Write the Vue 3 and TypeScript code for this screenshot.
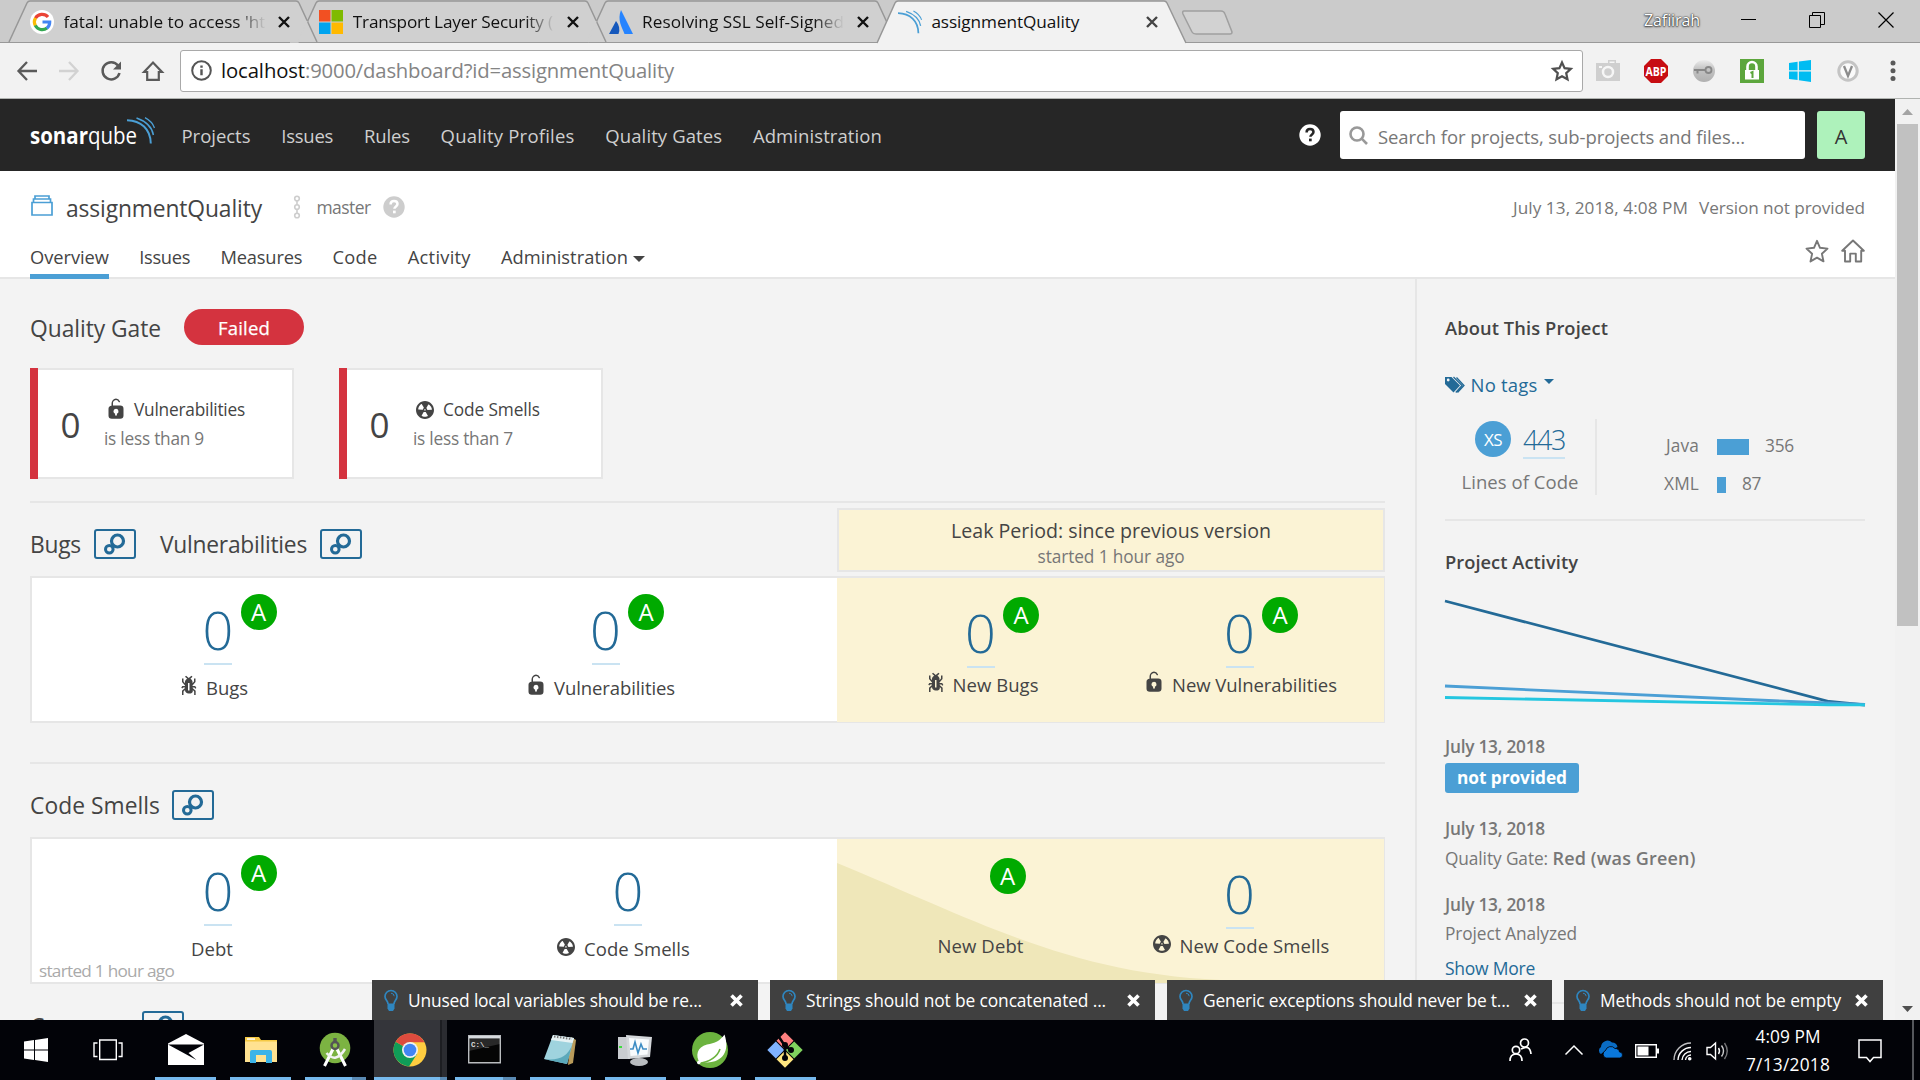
<script setup lang="ts">
import type { Directive } from 'vue'

// Tracks text in or out so that it fills the given width in pixels.
const vFit: Directive<HTMLElement, number> = {
  mounted(el, { value }) {
    const range = document.createRange()
    range.selectNodeContents(el)
    const natural = range.getBoundingClientRect().width
    const count = (el.textContent ?? '').length
    if (count > 0) el.style.letterSpacing = `${((value - natural) / count).toFixed(3)}px`
  },
}

interface Label { text: string; w: number }
interface Measure extends Label {
  key: string
  icon?: string
  value?: string
  rating?: string
}
interface Toast extends Label { width: number }
interface Task { name: string; width: number; more?: number; active?: boolean }

const navItems: Label[] = [
  { text: 'Projects', w: 69 },
  { text: 'Issues', w: 52 },
  { text: 'Rules', w: 46 },
  { text: 'Quality Profiles', w: 134 },
  { text: 'Quality Gates', w: 117 },
  { text: 'Administration', w: 129 },
]

const projectTabs: Label[] = [
  { text: 'Overview', w: 79 },
  { text: 'Issues', w: 51 },
  { text: 'Measures', w: 82 },
  { text: 'Code', w: 45 },
  { text: 'Activity', w: 63 },
  { text: 'Administration', w: 127 },
]

const conditions = [
  { icon: 'vuln', text: 'Vulnerabilities', w: 111, rule: 'is less than 9' },
  { icon: 'smell', text: 'Code Smells', w: 97, rule: 'is less than 7' },
]

const bugs: Measure[] = [
  { key: 'c1', icon: 'bug', text: 'Bugs', w: 42, value: '0', rating: 'A' },
  { key: 'c2', icon: 'vuln', text: 'Vulnerabilities', w: 121, value: '0', rating: 'A' },
]
const newBugs: Measure[] = [
  { key: 'c3', icon: 'bug', text: 'New Bugs', w: 86, value: '0', rating: 'A' },
  { key: 'c4', icon: 'vuln', text: 'New Vulnerabilities', w: 165, value: '0', rating: 'A' },
]
const smells: Measure[] = [
  { key: 'c1', text: 'Debt', w: 42, value: '0', rating: 'A' },
  { key: 'c2 wide', icon: 'smell', text: 'Code Smells', w: 106, value: '0' },
]
const newSmells: Measure[] = [
  { key: 'c3', text: 'New Debt', w: 86, rating: 'A' },
  { key: 'c4', icon: 'smell', text: 'New Code Smells', w: 150, value: '0' },
]

const languages = [
  { name: 'Java', w: 33, bar: 32, lines: '356', lw: 29 },
  { name: 'XML', w: 35, bar: 9, lines: '87', lw: 19 },
]

const toasts: Toast[] = [
  { text: 'Unused local variables should be re...', w: 294, width: 386 },
  { text: 'Strings should not be concatenated ...', w: 300, width: 385 },
  { text: 'Generic exceptions should never be t...', w: 307, width: 385 },
  { text: 'Methods should not be empty', w: 241, width: 319 },
]

const tasks: Task[] = [
  { name: 'mail', width: 61 },
  { name: 'folder', width: 61 },
  { name: 'studio', width: 47, more: 14 },
  { name: 'chrome', width: 66, more: 7, active: true },
  { name: 'cmd', width: 48, more: 13 },
  { name: 'notes', width: 61 },
  { name: 'monitor', width: 61 },
  { name: 'leaf', width: 61 },
  { name: 'git', width: 61 },
]
</script>

<template>
  <svg class="defs" aria-hidden="true">
    <symbol id="bug" viewBox="0 0 16 16"><path d="M11 9h1.3l.5.8.8-.5-.8-1.3H11v-.3l2-2.3V3h-1v2l-1 1.2V5c-.1-.8-.7-1.5-1.4-1.9L11 1.8l-.7-.7-1.8 1.6-1.8-1.6-.7.7 1.5 1.3C6.7 3.5 6.1 4.2 6 5v1.1L5 5V3H4v2.3l2 2.3V8H4.2l-.7 1.2.8.5.4-.7H6v.3l-2 1.9V14h1v-2.4l1-1C6 12 7.1 13 8.4 13h.8c.7 0 1.4-.3 1.8-.9.3-.4.3-.9.2-1.4l.9.9V14h1v-2.8l-2-1.9V9zm-2 2H8V6h1v5z" /></symbol>
    <symbol id="vuln" viewBox="0 0 16 16"><path d="M10.8 5H6V3.9a2.28 2.28 0 0 1 2-2.5 2.22 2.22 0 0 1 1.8 1.2.48.48 0 0 0 .7.2.48.48 0 0 0 .1-.7A3 3 0 0 0 8 .4a3.34 3.34 0 0 0-3 3.5v1.2a2.16 2.16 0 0 0-2 2.1v4.4a2.22 2.22 0 0 0 2.2 2.2h5.6a2.22 2.22 0 0 0 2.2-2.2V7.2A2.22 2.22 0 0 0 10.8 5zm-2.2 5.5v1.2H7.4v-1.2a1.66 1.66 0 0 1-1.1-1.6A1.75 1.75 0 0 1 8 7.2a1.71 1.71 0 0 1 .6 3.3z" /></symbol>
    <symbol id="smell" viewBox="0 0 16 16"><path d="M8 2C4.7 2 2 4.7 2 8s2.7 6 6 6 6-2.7 6-6-2.7-6-6-6zm-.5 5.5h.9v.9h-.9v-.9zm-3.8.2c-.1 0-.2-.1-.2-.2 0-.4.1-1.2.6-2S5.3 4.2 5.6 4c.2 0 .3 0 .3.1l1.3 2.3c0 .1 0 .2-.1.2-.1.2-.2.3-.3.5-.1.2-.2.4-.2.5 0 .1-.1.2-.2.2l-2.7-.1zM9.900 12c-.3.2-1.100.5-2 .5-.9 0-1.700-.3-2-.5-.1 0-.1-.2-.1-.3l1.300-2.300c0-.1.1-.1.2-.1.2.1.3.1.5.1s.4 0 .5-.1c.1 0 .2 0 .2.1l1.300 2.300c.2.2.2.3.1.3zm2.500-4.100L9.700 8c-.1 0-.2-.1-.2-.2 0-.2-.1-.4-.2-.5 0-.1-.2-.3-.3-.4-.1 0-.1-.1-.1-.2l1.300-2.300c.1-.1.2-.1.3-.1.3.2 1 .7 1.500 1.500s.6 1.600.6 2c0 0-.1.1-.2.1z" /></symbol>
    <symbol id="link" viewBox="0 0 24 24"><circle cx="14.500" cy="9" r="6" fill="none" stroke="#236a97" stroke-width="3.200" /><circle cx="6.300" cy="17.200" r="3.800" fill="none" stroke="#236a97" stroke-width="3" /></symbol>
    <symbol id="waves" viewBox="0 0 28 27"><g fill="none" stroke="#4b9fd5" stroke-width="2"><path d="M0 3.200C14 3.600 23.500 12 23.800 26.500" /><path d="M9.500 1C18 4 25 10 26.400 18" stroke-width="1.500" /><path d="M18 .6C22.500 3 26 6.500 27.500 11" stroke-width="1.300" /></g></symbol>
    <symbol id="q" viewBox="0 0 22 22"><circle cx="11" cy="11" r="10.700" fill="var(--disc)" /><path d="M7.600 8.400C7.600 6.200 9.100 5.100 11 5.100s3.500 1.100 3.500 3c0 2.300-3.100 2.300-3.100 4.700" fill="none" stroke="var(--mark)" stroke-width="2.500" /><rect x="10" y="14.600" width="2.700" height="2.700" fill="var(--mark)" /></symbol>
    <symbol id="x" viewBox="0 0 12 12"><path d="M1 1l10 10M11 1L1 11" fill="none" stroke="currentColor" stroke-width="2.400" /></symbol>
  </svg>

  <div class="screen">
    <header class="strip">
      <svg class="strip-art" width="1920" height="43">
        <path d="M0 42.500H1920" stroke="#999" />
        <g fill="#d0d0d0" stroke="#979797" stroke-width="1.500">
          <path d="M587 42L605 3Q606 1 608 1H875Q877 1 878 3L896 42" />
          <path d="M298 42L316 3Q317 1 319 1H585Q587 1 588 3L606 42" />
          <path d="M9 42L27 3Q28 1 30 1H296Q298 1 299 3L317 42" />
        </g>
        <path d="M307 21L298 42H290M596 21L588 42" fill="none" stroke="#d0d0d0" stroke-width="1.500" />
        <path d="M877 43L895 3Q896 1 898 1H1164Q1166 1 1167 3L1186 43" fill="#f2f2f2" stroke="#979797" stroke-width="1.500" />
        <path d="M1184 11H1221Q1224 11 1225 14L1232 32Q1232 34 1230 34H1196Q1193 34 1192 32L1183 14Q1182 11 1184 11Z" fill="#d2d2d2" stroke="#a0a0a0" stroke-width="1.500" />
      </svg>
      <div class="tabs">
        <div class="tab">
          <svg width="24" height="24" viewBox="0 0 24 24"><circle cx="12" cy="12" r="12" fill="#fff" /><g fill="none" stroke-width="3.200"><path d="M18 7A7.700 7.700 0 0 0 5.400 8.300" stroke="#ea4335" /><path d="M5.500 8A7.800 7.800 0 0 0 5.400 15.700" stroke="#fbbc05" /><path d="M5.300 15.400A7.700 7.700 0 0 0 17 18" stroke="#34a853" /><path d="M16.800 18.200A7.700 7.700 0 0 0 19.700 12H12.500" stroke="#4285f4" /></g></svg>
          <div class="tab-text fade"><span v-fit="202">fatal: unable to access 'ht</span></div>
          <svg class="tab-x" width="12" height="12"><use href="#x" /></svg>
        </div>
        <div class="tab">
          <svg width="24" height="24" viewBox="0 0 24 24"><path fill="#f25022" d="M0 0h11.500v11.500H0z" /><path fill="#7fba00" d="M12.500 0H24v11.500H12.500z" /><path fill="#00a4ef" d="M0 12.500h11.500V24H0z" /><path fill="#ffb900" d="M12.500 12.500H24V24H12.500z" /></svg>
          <div class="tab-text fade"><span v-fit="200">Transport Layer Security (</span></div>
          <svg class="tab-x" width="12" height="12"><use href="#x" /></svg>
        </div>
        <div class="tab">
          <svg width="24" height="24" viewBox="0 0 24 24"><path d="M7 11Q12 17 9.500 24H0Z" fill="#1558bc" /><path d="M12 0L24 24H15.500C13 17 8 10 12 0Z" fill="#2684ff" /></svg>
          <div class="tab-text fade"><span v-fit="202">Resolving SSL Self-Signed</span></div>
          <svg class="tab-x" width="12" height="12"><use href="#x" /></svg>
        </div>
        <div class="tab">
          <svg width="24" height="24"><use href="#waves" /></svg>
          <div class="tab-text"><span v-fit="148">assignmentQuality</span></div>
          <svg class="tab-x soft" width="12" height="12"><use href="#x" /></svg>
        </div>
      </div>
      <div class="window-tools">
        <span v-fit="56" class="profile">Zafiirah</span>
        <svg width="15" height="15"><path d="M0 7.500h15" stroke="#000" /></svg>
        <svg width="16" height="16" fill="none" stroke="#000"><path d="M.5 3.500h11v12H.5zM3.500 3V.5h12v12h-4" /></svg>
        <svg width="16" height="16"><path d="M.5.5l15 15M15.500.5l-15 15" stroke="#000" stroke-width="1.200" /></svg>
      </div>
    </header>

    <div class="toolbar">
      <div class="nav-icons">
        <svg width="20" height="20" fill="none" stroke="#5a5a5a" stroke-width="2.300"><path d="M10 1L1.500 10 10 19M1.500 10H20" /></svg>
        <svg width="20" height="20" fill="none" stroke="#d2d2d2" stroke-width="2.300"><path d="M10 1L18.500 10 10 19M18.500 10H0" /></svg>
        <svg width="22" height="20" fill="none" stroke="#5a5a5a" stroke-width="2.500"><path d="M18 4.500A8.600 8.600 0 1 0 19.500 12" /><path d="M21 .5V8.500H13Z" fill="#5a5a5a" stroke="none" /></svg>
        <svg width="20" height="20" fill="none" stroke="#5a5a5a" stroke-width="2.200"><path d="M1 11L10 1.500 19 11H15.800V18.800H4.200V11Z" /></svg>
      </div>
      <div class="address">
        <svg width="21" height="21" viewBox="0 0 21 21"><circle cx="10.500" cy="10.500" r="9.300" fill="none" stroke="#555" stroke-width="2" /><path d="M9.300 9.300h2.400v6H9.300zM9.300 5.500h2.400v2.300H9.300z" fill="#555" /></svg>
        <p class="url"><b v-fit="84">localhost</b><span v-fit="369">:9000/dashboard?id=assignmentQuality</span></p>
        <svg width="22" height="22" viewBox="0 0 22 22"><path d="M11 2.500l2.600 5.700 6.200.7-4.600 4.200 1.300 6.200L11 16.200l-5.500 3.100 1.300-6.200L2.200 8.900l6.200-.7z" fill="none" stroke="#505050" stroke-width="2.200" /></svg>
      </div>
      <div class="extensions">
        <svg width="24" height="24" viewBox="0 0 24 24"><path d="M0 4h12V1h8v3h4v18H0z" fill="#cfcfcf" /><circle cx="12" cy="13" r="5" fill="none" stroke="#f6f6f6" stroke-width="2.500" /><path d="M13.500 2.500h5v1.500h-5zM3 7h3v2H3z" fill="#f6f6f6" /></svg>
        <svg width="24" height="24" viewBox="0 0 24 24"><path d="M7 0h10l7 7v10l-7 7H7l-7-7V7z" fill="#c70d12" /><text x="12" y="16.500" text-anchor="middle" textLength="21" lengthAdjust="spacingAndGlyphs" fill="#fff" class="abp">ABP</text></svg>
        <svg width="24" height="24" viewBox="0 0 24 24"><defs><linearGradient id="orb" x2="0" y2="1"><stop offset="0" stop-color="#ececec" /><stop offset=".4" stop-color="#c4c4c4" /><stop offset="1" stop-color="#b0b0b0" /></linearGradient></defs><circle cx="12" cy="12" r="11" fill="url(#orb)" /><path d="M2 11h12M5.500 11v3.500" stroke="#888" stroke-width="2" /><circle cx="16.500" cy="11" r="3" fill="none" stroke="#888" stroke-width="1.800" /></svg>
        <svg width="24" height="24" viewBox="0 0 24 24"><path fill="#5ca63c" d="M0 0h24v24H0z" /><path d="M7.500 11V7.500a4.500 4.500 0 0 1 9 0V11" fill="none" stroke="#fff" stroke-width="2.600" /><path fill="#fff" d="M5 11h14v9.500H5z" /><path d="M10.500 14l2-1v6" fill="none" stroke="#5ca63c" stroke-width="2" /></svg>
        <svg width="22" height="22" viewBox="0 0 22 22" fill="#00bcf2"><path d="M0 3l8.600-1.200v8.500H0zM9.900 1.600L22 0v10.300H9.900zM0 11.600h8.600v8.500L0 19zM9.900 11.600H22V22L9.900 20.300z" /></svg>
        <svg width="22" height="22" viewBox="0 0 22 22"><circle cx="11" cy="11" r="9.200" fill="#fafafa" stroke="#c4c4c4" stroke-width="3" /><path d="M7 6l4 10 4-10" fill="none" stroke="#8c8c8c" stroke-width="2.300" /></svg>
        <svg width="6" height="22" viewBox="0 0 6 22" fill="#5a5a5a"><circle cx="3" cy="3" r="2.500" /><circle cx="3" cy="10.700" r="2.500" /><circle cx="3" cy="18.400" r="2.500" /></svg>
      </div>
    </div>

    <div class="viewport">
      <div class="page">
        <nav class="global-nav">
          <svg class="logo" width="128" height="36" viewBox="0 0 128 36">
            <text x="0" y="26" textLength="107" lengthAdjust="spacingAndGlyphs" class="logo-text"><tspan class="strong">sonar</tspan>qube</text>
            <use href="#waves" x="97" y="-1" width="28" height="27" />
          </svg>
          <div class="global-links"><a v-for="n in navItems" :key="n.text" v-fit="n.w">{{ n.text }}</a></div>
          <svg class="help-light" width="22" height="22"><use href="#q" /></svg>
          <div class="search">
            <svg width="19" height="19" viewBox="0 0 19 19" fill="none" stroke="#999" stroke-width="2.600"><circle cx="8" cy="8" r="6.500" /><path d="M12.700 12.700l5.300 5.300" /></svg>
            <span v-fit="367">Search for projects, sub-projects and files...</span>
          </div>
          <div class="avatar">A</div>
        </nav>

        <div class="project-head">
          <div class="crumb">
            <svg width="22" height="21" viewBox="0 0 22 21" fill="none" stroke="#4b9fd5" stroke-width="1.700"><path d="M1 7.500h20V20H1zM2.500 7.500V4h17v3.500M4 4V1h14v3" /></svg>
            <h1 v-fit="196">assignmentQuality</h1>
            <svg class="branch" width="8" height="24" viewBox="0 0 8 24" fill="none" stroke="#cdcdcd" stroke-width="1.600"><circle cx="4" cy="3.500" r="2.300" /><circle cx="4" cy="12" r="2.300" /><circle cx="4" cy="20.500" r="2.300" /><path d="M4 6v3.500M4 14.500V18" /></svg>
            <span v-fit="54" class="muted">master</span>
            <svg class="help-grey" width="22" height="22"><use href="#q" /></svg>
            <div class="meta"><span v-fit="175">July 13, 2018, 4:08 PM</span><span v-fit="166">Version not provided</span></div>
          </div>
          <div class="project-nav">
            <a v-for="(t, i) in projectTabs" :key="t.text" :class="{ on: i === 0 }"><span v-fit="t.w">{{ t.text }}</span><i v-if="i === 5" class="caret"></i></a>
            <div class="project-actions">
              <svg width="24" height="24" viewBox="0 0 24 24" fill="none" stroke="#777" stroke-width="1.900"><path d="M12 1.800l3 7 7.500.8-5.600 5.200 1.600 7.600L12 18.600l-6.500 3.800 1.600-7.600L1.500 9.600 9 8.800z" stroke-linejoin="round" /></svg>
              <svg width="24" height="24" viewBox="0 0 24 24" fill="none" stroke="#777" stroke-width="1.900"><path d="M1.200 11.800L12 1.500l10.800 10.300h-2.600v10.700h-5.400V14.600H9.200v7.900H4V11.800z" stroke-linejoin="round" /></svg>
            </div>
          </div>
        </div>

        <div class="columns">
          <main>
            <div class="gate">
              <h2 v-fit="131">Quality Gate</h2>
              <span class="pill"><span v-fit="52">Failed</span></span>
            </div>
            <div class="conditions">
              <div v-for="c in conditions" :key="c.text" class="condition">
                <span class="cond-value">0</span>
                <div class="cond-info">
                  <div class="cond-name"><svg width="24" height="24"><use :href="'#' + c.icon" /></svg><span v-fit="c.w">{{ c.text }}</span></div>
                  <div class="cond-rule"><span v-fit="100">{{ c.rule }}</span></div>
                </div>
              </div>
            </div>

            <div class="domain first">
              <div class="domain-head">
                <h2 v-fit="51">Bugs</h2><span class="link-btn"><svg width="24" height="24"><use href="#link" /></svg></span>
                <h2 v-fit="147" class="second">Vulnerabilities</h2><span class="link-btn"><svg width="24" height="24"><use href="#link" /></svg></span>
              </div>
              <div class="leak-head">
                <span v-fit="320">Leak Period: since previous version</span>
                <small v-fit="147">started 1 hour ago</small>
              </div>
            </div>
            <div class="panel">
              <div class="overall">
                <div v-for="m in bugs" :key="m.text" class="cell" :class="m.key">
                  <div class="value"><span>{{ m.value }}</span><b v-if="m.rating" class="rating">{{ m.rating }}</b></div>
                  <div class="label"><svg v-if="m.icon" width="24" height="24"><use :href="'#' + m.icon" /></svg><span v-fit="m.w">{{ m.text }}</span></div>
                </div>
              </div>
              <div class="leak">
                <div v-for="m in newBugs" :key="m.text" class="cell" :class="m.key">
                  <div class="value"><span>{{ m.value }}</span><b v-if="m.rating" class="rating">{{ m.rating }}</b></div>
                  <div class="label"><svg v-if="m.icon" width="24" height="24"><use :href="'#' + m.icon" /></svg><span v-fit="m.w">{{ m.text }}</span></div>
                </div>
              </div>
            </div>

            <div class="domain second-domain">
              <div class="domain-head">
                <h2 v-fit="130">Code Smells</h2><span class="link-btn"><svg width="24" height="24"><use href="#link" /></svg></span>
              </div>
            </div>
            <div class="panel">
              <div class="overall">
                <div v-for="m in smells" :key="m.text" class="cell" :class="m.key">
                  <div class="value"><span>{{ m.value }}</span><b v-if="m.rating" class="rating">{{ m.rating }}</b></div>
                  <div class="label"><svg v-if="m.icon" width="24" height="24"><use :href="'#' + m.icon" /></svg><span v-fit="m.w">{{ m.text }}</span></div>
                </div>
                <small v-fit="135" class="since">started 1 hour ago</small>
              </div>
              <div class="leak">
                <svg class="area" width="547" height="144"><path d="M0 24C150 86 240 138 400 141.500C450 143 500 143 547 143.500V144H0Z" fill="#efe7b9" /></svg>
                <div v-for="m in newSmells" :key="m.text" class="cell" :class="m.key">
                  <div class="value" :class="{ bare: !m.value }"><span>{{ m.value }}</span><b v-if="m.rating" class="rating">{{ m.rating }}</b></div>
                  <div class="label"><svg v-if="m.icon" width="24" height="24"><use :href="'#' + m.icon" /></svg><span v-fit="m.w">{{ m.text }}</span></div>
                </div>
              </div>
            </div>
            <div class="coverage"><h2 v-fit="100">Coverage</h2><span class="link-btn"><svg width="24" height="24"><use href="#link" /></svg></span></div>
          </main>

          <aside>
            <h3 v-fit="163">About This Project</h3>
            <div class="tags">
              <svg width="20" height="18" viewBox="0 0 20 18"><path d="M0 1h6.500L15 9.500 8.500 16.500 0 8z" fill="#236a97" /><circle cx="3.200" cy="4" r="1.400" fill="#f3f3f3" /><path d="M8.500 1L17 9.500 10.800 16.500M11.500 1.500L19 9.500l-6.500 7" fill="none" stroke="#236a97" stroke-width="1.300" /></svg>
              <span v-fit="67">No tags</span><i class="caret"></i>
            </div>
            <div class="size">
              <div class="loc">
                <div class="loc-top"><span class="xs">XS</span><span class="loc-num"><span v-fit="42">443</span></span></div>
                <span v-fit="117" class="loc-label">Lines of Code</span>
              </div>
              <div class="langs">
                <div v-for="l in languages" :key="l.name" class="lang">
                  <span class="lang-name"><span v-fit="l.w">{{ l.name }}</span></span>
                  <i class="lang-bar" :style="{ width: l.bar + 'px' }"></i>
                  <span v-fit="l.lw">{{ l.lines }}</span>
                </div>
              </div>
            </div>
            <h3 v-fit="133" class="activity-title">Project Activity</h3>
            <svg class="chart" width="420" height="112" viewBox="0 0 420 112" fill="none" stroke-width="2.800">
              <path d="M0 7L384 107.500 420 111" stroke="#236a97" />
              <path d="M0 92L346 107.500 420 110.500" stroke="#4b9fd5" />
              <path d="M0 103.500L384 110.800H420" stroke="#24c6e0" />
            </svg>
            <div class="event"><time v-fit="100">July 13, 2018</time><span class="version"><span v-fit="110">not provided</span></span></div>
            <div class="event e2"><time v-fit="100">July 13, 2018</time><p><span v-fit="103">Quality Gate:</span> <b v-fit="143">Red (was Green)</b></p></div>
            <div class="event e3"><time v-fit="100">July 13, 2018</time><p><span v-fit="132">Project Analyzed</span></p></div>
            <a class="more"><span v-fit="90">Show More</span></a>
            <hr />
          </aside>
        </div>
      </div>

      <div class="scrollbar">
        <svg width="25" height="25"><path d="M7 16l5.500-6 5.500 6z" fill="#a3a3a3" /></svg>
        <div class="thumb"></div>
        <svg class="down" width="25" height="25"><path d="M7 11h11l-5.500 6z" fill="#505050" /></svg>
      </div>

      <div class="toasts">
        <div v-for="t in toasts" :key="t.text" class="toast" :style="{ width: t.width + 'px' }">
          <svg width="14" height="21" viewBox="0 0 14 21"><path d="M4 14C4 10.500 1 10 1 6.500a6 6 0 0 1 12 0C13 10 10 10.500 10 14" fill="none" stroke="#2f86bf" stroke-width="1.700" /><path d="M3.500 13.500h7v5L9 21H5l-1.500-2.500z" fill="#2f86bf" /><path d="M7 3.200a3.300 3.300 0 0 1 3.200 3" fill="none" stroke="#2f86bf" /></svg>
          <span v-fit="t.w">{{ t.text }}</span>
          <svg class="toast-x" width="13" height="13" viewBox="0 0 13 13"><path d="M1.500 1.500l10 10M11.500 1.500l-10 10" stroke="#fff" stroke-width="3.600" /></svg>
        </div>
      </div>
    </div>

    <footer class="taskbar">
      <svg class="start" width="24" height="24" viewBox="0 0 24 24" fill="#fff"><path d="M0 3.400l10-1.300v9.300H0zM11 1.900L24 0v11.400H11zM0 12.500h10v9.400L0 20.600zM11 12.500h13V24L11 22.100z" /></svg>
      <svg class="view" width="30" height="22" viewBox="0 0 30 22" fill="none" stroke="#fff" stroke-width="1.400"><path d="M6.700 1h16.600v19.500H6.700zM4.500 4H1v13.500h3.500M25.500 4H29v13.500h-3.500" /></svg>
      <div class="tasks">
        <div v-for="t in tasks" :key="t.name" class="task" :class="{ active: t.active }">
          <div class="task-icon" :class="t.name">
            <svg v-if="t.name === 'mail'" width="36" height="32" viewBox="0 0 36 32"><path d="M0 9.500L18 0l18 9.500V31H0z" fill="#fff" /><path d="M0 10.500L36 10.500 20.500 19 28.500 26z" fill="#020308" /></svg>
            <svg v-else-if="t.name === 'folder'" width="32" height="28" viewBox="0 0 32 28"><path d="M0 1h14l2 3h16v22H0z" fill="#f5c945" /><path d="M0 5.500h32V26H0z" fill="#ffe291" /><path d="M2 2.300h8v1.500H2z" fill="#fff" /><path d="M5 27V16q0-2 2-2h18q2 0 2 2v11h-6v-8H11v8z" fill="#3cb4e8" /></svg>
            <svg v-else-if="t.name === 'studio'" width="32" height="36" viewBox="0 0 32 36"><circle cx="16" cy="16" r="15.300" fill="#7cb342" /><path d="M14.500 16L5.500 34M17.500 16L26.500 34" stroke="#fff" stroke-width="3" /><path d="M7.500 21Q17 32 26 17" fill="none" stroke="#f2f2f2" stroke-width="2.500" /><path d="M14.300 6h3.400v4h-3.400z" fill="#555" /><circle cx="16" cy="13.500" r="3.500" fill="#8bc34a" stroke="#555" stroke-width="2.500" /></svg>
            <svg v-else-if="t.name === 'chrome'" width="34" height="34" viewBox="0 0 34 34"><circle cx="17" cy="17" r="16.500" fill="#ffcd40" /><path d="M17 17L2.700 8.700A16.500 16.500 0 0 0 16 33.400l8-12.300z" fill="#109d58" /><path d="M17 17L2.700 8.700A16.500 16.500 0 0 1 31.500 9.300H17z" fill="#dd4b3e" /><circle cx="17" cy="17" r="8" fill="#f1f1f1" /><circle cx="17" cy="17" r="6.300" fill="#4285f4" /></svg>
            <svg v-else-if="t.name === 'cmd'" width="33" height="29" viewBox="0 0 33 29"><path d="M.7.700h31.600v27H.7z" fill="#050505" stroke="#b9bcbf" stroke-width="1.400" /><path d="M1 1h31v2.500H1z" fill="#d6dade" /><path d="M1 4h31v5L1 16z" fill="#fff" opacity=".14" /><text x="3" y="12" class="cmd-text">C:\_</text></svg>
            <svg v-else-if="t.name === 'notes'" width="32" height="34" viewBox="0 0 32 34"><path d="M27 4l5 3-3 23-5 2z" fill="#b99b5a" /><path d="M9 2l21 3-7 26L0 26z" fill="#9fd3de" /><path d="M9 2l21 3-1.500 5L7 7z" fill="#e6f2f4" /><path d="M0 26l23 5 5-19q-6 17-28 14z" fill="#5ba9bb" /><path d="M10 3.500l18 2.600" stroke="#777" stroke-width="2" stroke-dasharray="1.500 1.500" /></svg>
            <svg v-else-if="t.name === 'monitor'" width="36" height="34" viewBox="0 0 36 34"><path d="M0 4h12v22H0z" fill="#c9ccd0" /><path d="M8 2l26 2-2 20-22 2z" fill="#d4d7da" /><path d="M11 5l20 1.500-1.500 15L12.500 23z" fill="#f8fbfd" /><path d="M12 16h3l2-7 3 11 3-9 2 5h4" fill="none" stroke="#3c8cc4" stroke-width="1.600" /><ellipse cx="21" cy="29" rx="9" ry="4" fill="#b9bcc0" /><path d="M1 13h3v2H1z" fill="#3ddc3d" /></svg>
            <svg v-else-if="t.name === 'leaf'" width="36" height="36" viewBox="0 0 36 36"><circle cx="18" cy="18" r="18" fill="#6cb33f" /><path d="M32.500 2.500C38 19 31 30 15 30.500L8 31C3 24 5 15 15 12.500C23 11 28 9 32.500 2.500Z" fill="#fff" /><path d="M6 31.500C17 30 25 26 28 17" fill="none" stroke="#6cb33f" stroke-width="1.600" /><circle cx="6.800" cy="30.500" r="1.800" fill="#fff" /></svg>
            <svg v-else width="36" height="36" viewBox="0 0 36 36"><g transform="rotate(45 18 18)"><path d="M5.500 5.500h12v12h-12z" fill="#ff8080" /><path d="M18.500 5.500h12v12h-12z" fill="#80d35e" /><path d="M5.500 18.500h12v12h-12z" fill="#80b3ff" /><path d="M18.500 18.500h12v12h-12z" fill="#ffe680" /></g><path d="M12 5l6 9v12M18 14l6 4" fill="none" stroke="#020308" stroke-width="2.500" /><g fill="#020308"><circle cx="18" cy="13" r="3" /><circle cx="24" cy="18" r="3" /><circle cx="18" cy="26" r="3" /></g></svg>
          </div>
          <div class="task-line"><i :style="{ width: t.width + 'px' }"></i><i v-if="t.more" class="dim" :style="{ width: t.more + 'px' }"></i></div>
        </div>
      </div>
      <div class="tray">
        <svg width="23" height="24" viewBox="0 0 23 24" fill="none" stroke="#fff" stroke-width="1.700"><circle cx="7" cy="12" r="3.700" /><path d="M1 23q0-7 6-7t6 7" /><circle cx="15.500" cy="5" r="4" /><path d="M12 11q9-5 10 5" /></svg>
        <svg class="chev" width="18" height="10" fill="none" stroke="#fff" stroke-width="1.500"><path d="M.5 9.500L9 1l8.500 8.500" /></svg>
        <svg class="cloud" width="24" height="16" viewBox="0 0 24 16"><path d="M3 12A4 4 0 0 1 3 5a6.500 6.500 0 0 1 11-4.500 5.500 5.500 0 0 1 5.500 4.500l-2 1L9 7z" fill="#0a6cc4" /><path d="M8 16a4 4 0 0 1-.5-7.500 5.500 5.500 0 0 1 9.500-2 4 4 0 0 1 4.500 3.500 3 3 0 0 1 0 6z" fill="#0a78dc" stroke="#020308" stroke-width=".8" /></svg>
        <svg class="battery" width="24" height="14" viewBox="0 0 24 14"><path d="M.7.700h20.600v12.600H.7z" fill="none" stroke="#fff" stroke-width="1.400" /><path d="M2.500 2.500h11v9h-11zM22 4.500h2v5h-2z" fill="#fff" /></svg>
        <svg class="wifi" width="19" height="19" viewBox="0 0 19 19" fill="none" stroke="#fff" stroke-width="1.400"><path d="M1 18A17 17 0 0 1 18 1" opacity=".75" /><path d="M5 18A13 13 0 0 1 18 5.500M9 18a9 9 0 0 1 9-8.500M12.500 18a5.500 5.500 0 0 1 5.500-5" /><circle cx="16.700" cy="16.700" r="1.800" fill="#fff" stroke="none" /></svg>
        <svg class="speaker" width="23" height="20" viewBox="0 0 23 20" fill="none" stroke="#fff" stroke-width="1.400"><path d="M1 6.500h3.500L9.500 2v16L4.500 13.500H1zM12.500 7q2 3 0 6" /><path d="M15.500 4.500q4 5.500 0 11" opacity=".8" /><path d="M18.500 2q5.500 8 0 16" opacity=".45" /></svg>
        <div class="clock"><span v-fit="65">4:09 PM</span><span v-fit="84">7/13/2018</span></div>
        <svg class="note" width="24" height="24" viewBox="0 0 24 24" fill="none" stroke="#fff" stroke-width="1.500"><path d="M1 1h22v17.500h-7.500L12 22.500 8.500 18.500H1z" /></svg>
        <i class="peek"></i>
      </div>
    </footer>
  </div>
</template>

<style>
body { margin: 0; overflow: hidden; }
</style>

<style scoped>
* { box-sizing: border-box; margin: 0; padding: 0; }
svg { display: block; flex: none; overflow: visible; }
.defs { position: absolute; width: 0; height: 0; }
.screen { width: 1920px; height: 1080px; display: flex; flex-direction: column; overflow: hidden; font-family: "Open Sans", "Noto Sans", sans-serif; font-size: 18.5px; color: #444; white-space: nowrap; background: #f3f3f3; }

.strip { height: 43px; background: #cbcbcb; position: relative; display: flex; justify-content: space-between; flex: none; }
.strip-art { position: absolute; inset: 0; }
.tabs { display: flex; position: relative; padding-left: 30px; }
.tab { width: 289.3px; display: flex; align-items: center; color: #111; font-size: 17.2px; }
.tab-text { width: 202px; margin-left: 9.5px; overflow: hidden; line-height: 40px; }
.tab-text.fade { mask-image: linear-gradient(90deg, #000 85%, transparent 100%); }
.tab-x { margin-left: 12.5px; color: #111; }
.tab-x.soft { color: #444; }
.window-tools { position: relative; display: flex; padding-right: 26px; height: 39px; align-items: center; }
.profile { color: #fff; font-size: 16px; width: 56px; text-shadow: 0 0 1px #333, 0 0 2px #333, 0 1px 2px #444; margin-right: 41px; }
.window-tools svg { margin-right: 53px; }
.window-tools svg:last-child { margin-right: 0; }

.toolbar { height: 56px; flex: none; background: #f2f2f2; border-bottom: 1px solid #b0b3b0; display: flex; align-items: center; padding-left: 17px; }
.nav-icons { display: flex; gap: 22px; width: 163px; }
.nav-icons svg:nth-child(3) { margin-left: -1px; }
.nav-icons svg:nth-child(4) { margin-left: -1px; }
.address { width: 1403px; height: 42px; background: #fff; border: 1px solid #a9a9a9; border-radius: 3px; display: flex; align-items: center; padding: 0 9px 0 10px; }
.url { flex: 1; margin-left: 9px; font-size: 20.3px; color: #848484; line-height: 38px; margin-top: -2px; }
.url b { color: #111; font-weight: 400; }
.extensions { display: flex; align-items: center; margin-left: 13px; gap: 24px; }
.extensions svg:nth-child(5) { margin-left: 1px; }
.extensions svg:nth-child(6) { margin-left: 2px; }
.extensions svg:nth-child(7) { margin-left: 7px; }
.abp { font: 700 12px "Open Sans", sans-serif; }

.viewport { height: 921px; flex: none; position: relative; display: flex; overflow: hidden; }
.page { width: 1895px; display: flex; flex-direction: column; }
.global-nav { height: 72px; flex: none; background: #262626; display: flex; align-items: center; padding: 0 30px; }
.logo { margin-right: 23.5px; margin-top: 2px; }
.logo-text { font: 400 24px "Open Sans", sans-serif; fill: #fff; }
.strong { font-weight: 700; }
.global-links { display: flex; gap: 30.7px; color: #cfcfcf; font-size: 18.5px; }
.help-light { --disc: #fff; --mark: #262626; margin-left: auto; margin-right: 19px; }
.search { width: 465px; height: 48px; background: #fff; border-radius: 3px; display: flex; align-items: center; padding-left: 9px; gap: 10px; color: #777; font-size: 18.5px; }
.search span { padding-top: 2px; }
.avatar { width: 48px; height: 48px; margin-left: 12px; background: #aef2bb; border-radius: 3px; text-align: center; line-height: 51px; font-size: 20px; color: #333; }

.project-head { height: 108px; flex: none; background: #fff; border-bottom: 2px solid #e6e6e6; padding: 0 30px; display: flex; flex-direction: column; justify-content: space-between; }
.crumb { height: 66px; display: flex; align-items: center; padding: 6px 0 0 1px; }
.crumb { height: 74px; }
.crumb > svg:first-child { margin-right: 13px; margin-top: -3px; }
h1 { font-size: 22.8px; font-weight: 400; width: 197px; color: #444; margin-top: 3px; }
.branch { margin: -1px 15.5px 0 30px; }
.muted { width: 54px; color: #777; font-size: 17.5px; }
.help-grey { --disc: #cdcdcd; --mark: #fff; margin-left: 12px; margin-top: -1px; }
.meta { margin-left: auto; display: flex; gap: 11px; font-size: 17.2px; color: #777; }
.project-nav { display: flex; gap: 30.2px; height: 42px; margin-bottom: -2px; position: relative; }
.project-nav a { display: flex; line-height: 39px; height: 42px; border-bottom: 5px solid transparent; color: #444; font-size: 18.3px; }
.project-nav a.on { border-color: #4b9fd5; }
.caret { border: 6.5px solid transparent; border-top-color: currentColor; border-bottom: 0; height: 0; margin: 19px 0 0 5px; }
.project-actions { margin-left: auto; display: flex; gap: 12px; padding-top: 2px; }

.columns { display: flex; flex: 1; min-height: 0; overflow: hidden; background: #f3f3f3; }
main { width: 1415px; flex: none; padding-left: 30px; }
h2 { font-size: 22.8px; font-weight: 400; color: #444; line-height: 36px; }
.gate { display: flex; padding-top: 30px; gap: 22px; height: 66px; }
.gate h2 { width: 132px; padding-top: 2px; }
.pill { width: 120px; height: 36px; border-radius: 18px; background: #d4333f; color: #fff; text-align: center; line-height: 38px; font-size: 18.5px; -webkit-text-stroke: .25px #fff; }
.conditions { display: flex; gap: 53px; margin: 23px 0 0 8px; }
.condition { width: 256px; height: 111px; background: #fff; border: 2px solid #e6e6e6; border-left: 0; box-shadow: -8px 0 0 #d4333f; display: flex; padding: 26px 0 0 22.5px; }
.cond-value { width: 43.5px; font-size: 35px; line-height: 57px; font-weight: 400; color: #444; }
.cond-name { display: flex; gap: 6px; align-items: center; height: 27px; font-size: 17.3px; }
.cond-name svg, .label svg { fill: #444; }
.cond-rule { font-size: 17.3px; color: #777; line-height: 31px; }
.domain { width: 1355px; border-top: 2px solid #e6e6e6; display: flex; justify-content: space-between; }
.domain.first { margin-top: 22px; height: 75px; }
.second-domain { margin-top: 39px; height: 75px; }
.domain-head { display: flex; padding-top: 24px; }
.domain-head h2 { margin-right: 13px; }
.second-domain h2 { margin-right: 12px; }
.domain-head h2.second { margin-left: 24px; }
.link-btn { width: 42px; height: 30px; margin-top: 2px; border: 2px solid #236a97; border-radius: 3px; display: flex; align-items: center; justify-content: center; }
.leak-head { width: 548px; height: 64px; margin-top: 5px; background: #fbf3d5; border: 2px solid #e6e6e6; display: flex; flex-direction: column; align-items: center; line-height: 26px; padding-top: 8px; font-size: 19.6px; }
.leak-head small { font-size: 17.3px; color: #777; }
.panel { width: 1355px; height: 147px; background: #fff; border: 2px solid #e6e6e6; display: flex; border-right-width: 1px; }
.overall { width: 805px; display: flex; position: relative; }
.leak { width: 547px; height: 144px; background: #fbf3d5; display: flex; position: relative; }
.area { position: absolute; inset: 0; }
.cell { display: flex; flex-direction: column; align-items: center; padding-top: 25px; position: relative; }
.c1 { width: 360px; }
.c2 { width: 415px; }
.c2.wide { margin-left: 15px; width: 430px; }
.c3 { width: 287px; }
.c4 { width: 231px; }
.value { width: 28px; height: 62px; border-bottom: 2px solid #cae3f2; position: relative; line-height: 52px; font-size: 54px; font-weight: 300; color: #236a97; display: flex; justify-content: center; }
.overall .value { left: 6px; }
.leak .value { top: 3px; }
.value.bare { border-color: transparent; }
.rating { position: absolute; left: 36.5px; top: -9px; width: 36px; height: 36px; border-radius: 50%; background: #0a0; color: #fff; font-size: 24px; font-weight: 400; line-height: 36px; text-align: center; }
.bare .rating { left: 23px; }
.label { display: flex; align-items: center; gap: 6px; height: 32px; margin-top: 6px; font-size: 18.5px; }
.label svg { margin-top: -2px; }
.leak .label { margin-top: 3px; }
.since { position: absolute; left: 7px; bottom: 0; font-size: 17.2px; color: #aaa; }
.coverage { display: flex; padding-top: 25px; gap: 13px; }
.coverage h2 { width: 99px; }

aside { width: 480px; border-left: 2px solid #e6e6e6; padding: 0 30px 0 28px; display: flex; flex-direction: column; align-items: flex-start; }
h3 { font-size: 18.3px; font-weight: 600; line-height: 26px; margin-top: 36px; color: #444; }
.tags { display: flex; align-items: center; margin-top: 29px; height: 28px; color: #236a97; gap: 5.5px; }
.tags svg { margin-top: 1px; }
.tags .caret { margin: -5px 0 0 1px; border-width: 5.5px; border-bottom: 0; }
.size { display: flex; margin-top: 21px; width: 420px; height: 102px; border-bottom: 2px solid #e6e6e6; }
.loc { width: 152px; height: 76px; border-right: 2px solid #e6e6e6; display: flex; flex-direction: column; align-items: flex-start; padding-left: 16.5px; }
.loc-top { display: flex; padding-left: 13.5px; gap: 12px; height: 40px; }
.xs { width: 36px; height: 36px; margin-top: 1.5px; border-radius: 50%; background: #4b9fd5; color: #fff; text-align: center; line-height: 37px; font-size: 17px; letter-spacing: -.5px; }
.loc-num { height: 40px; border-bottom: 2px solid #cae3f2; font-size: 27px; font-weight: 300; line-height: 41px; color: #236a97; }
.loc-label { margin-top: 10px; line-height: 26px; color: #777; }
.langs { padding-top: 8px; }
.lang { display: flex; align-items: center; height: 38px; color: #777; font-size: 17.3px; line-height: 38px; }
.lang-name { width: 102px; text-align: right; }
.lang-bar { height: 16px; background: #4b9fd5; margin: 1px 16px 0 18px; }
.activity-title { margin-top: 28px; }
.chart { margin-top: 19px; }
.event { display: flex; flex-direction: column; align-items: flex-start; color: #777; font-size: 17.3px; margin-top: 28px; }
time { font-weight: 600; line-height: 26px; }
.version { height: 30px; width: 134px; margin-top: 3px; background: #4b9fd5; border-radius: 3px; color: #fff; font-weight: 700; line-height: 30px; text-align: center; }
.event p { line-height: 26px; margin-top: 3px; }
.event p b { font-weight: 600; font-size: 18px; }
.e2 { margin-top: 23px; }
.e3 { margin-top: 20px; }
.more { color: #236a97; line-height: 26px; margin-top: 8px; font-size: 17.5px; }
hr { width: 420px; border: 0; border-top: 2px solid #e6e6e6; margin-top: 21px; }

.scrollbar { width: 25px; background: #f1f1f1; display: flex; flex-direction: column; }
.thumb { width: 21px; height: 502px; background: #c1c1c1; margin-left: 2px; }
.down { margin-top: auto; }

.toasts { position: absolute; left: 372px; bottom: 0; display: flex; gap: 12px; }
.toast { height: 40px; background: #404040; color: #fff; display: flex; align-items: center; padding: 0 15px 0 12px; font-size: 17.4px; line-height: 39px; }
.toast span { margin-left: 10px; padding-top: 1px; }
.toast-x { margin-left: auto; margin-top: 1px; }

.taskbar { height: 60px; flex: none; background: #020308; display: flex; align-items: center; color: #fff; }
.start { margin-left: 24px; }
.view { margin-left: 45px; }
.tasks { display: flex; margin-left: 25px; gap: 0; height: 60px; }
.task { width: 75px; padding: 0 7px; display: flex; flex-direction: column; }
.task.active { background: linear-gradient(90deg, #34353a 66px, #1d1e22 66px, #1d1e22 68px, #2b2c31 68px); width: 73px; padding: 0; margin: 0 1px; }
.task-icon { flex: 1; display: flex; align-items: center; justify-content: center; padding-top: 2px; }
.task-icon.studio, .task-icon.chrome, .task-icon.cmd, .task-icon.notes, .task-icon.leaf, .task-icon.git { padding-right: 2px; }
.task-line { height: 3px; display: flex; }
.task-line i { background: #76b9ed; height: 3px; }
.task-line i.dim { background: #5a8ab4; }
.cmd-text { font: 700 7.5px "Liberation Mono", monospace; fill: #ddd; }
.tray { margin-left: auto; display: flex; align-items: center; height: 60px; }
.chev { margin-left: 33px; }
.cloud { margin-left: 15px; }
.battery { margin-left: 13px; margin-top: 2px; }
.wifi { margin-left: 14px; margin-top: 3px; }
.speaker { margin-left: 14px; margin-top: 1px; }
.clock { width: 84px; margin-left: 17px; display: flex; flex-direction: column; align-items: center; font-size: 17.3px; line-height: 28px; padding-top: 2px; }
.note { margin-left: 28px; margin-top: 1px; }
.peek { width: 2px; height: 60px; background: #55575c; margin: 0 6px 0 30px; }
</style>
